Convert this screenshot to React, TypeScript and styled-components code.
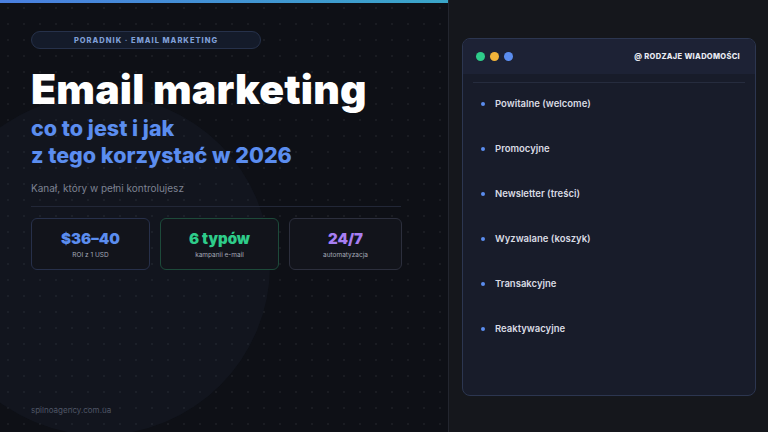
import React from 'react';
import styled, { createGlobalStyle } from 'styled-components';

const Global = createGlobalStyle`
  html, body { margin: 0; padding: 0; background: #0d0f14; }
  body { font-family: Inter, "Open Sans", sans-serif; }
`;

const stats = [
  { value: '$36–40', label: 'ROI z 1 USD', color: '#5b8def', border: '#27304a' },
  { value: '6 typów', label: 'kampanii e-mail', color: '#2ecc8a', border: '#1d4a3a' },
  { value: '24/7', label: 'automatyzacja', color: '#a77ef2', border: '#2c2f3d' },
];

const items = [
  'Powitalne (welcome)',
  'Promocyjne',
  'Newsletter (treści)',
  'Wyzwalane (koszyk)',
  'Transakcyjne',
  'Reaktywacyjne',
];

const App = (): JSX.Element => (
  <Page>
    <Global />
    <Left>
      <TopBar />
      <Glow />
      <Content>
        <Pill>PORADNIK · EMAIL MARKETING</Pill>
        <Title>Email marketing</Title>
        <Subtitle>
          co to jest i jak
          <br />z tego korzystać w 2026
        </Subtitle>
        <Tagline>Kanał, który w pełni kontrolujesz</Tagline>
        <Divider />
        <Stats>
          {stats.map((s) => (
            <Stat key={s.value} $border={s.border}>
              <StatValue $color={s.color}>{s.value}</StatValue>
              <StatLabel>{s.label}</StatLabel>
            </Stat>
          ))}
        </Stats>
        <Footer>spilnoagency.com.ua</Footer>
      </Content>
    </Left>
    <Right>
      <Card>
        <CardHead>
          <Dots>
            <Dot $c="#2ecc8a" />
            <Dot $c="#f2b43a" />
            <Dot $c="#5b8def" />
          </Dots>
          <CardTitle>@ RODZAJE WIADOMOŚCI</CardTitle>
        </CardHead>
        <CardBody>
          <List>
            {items.map((t) => (
              <Item key={t}>
                <Bullet />
                {t}
              </Item>
            ))}
          </List>
        </CardBody>
      </Card>
    </Right>
  </Page>
);

const Page = styled.div`
  width: 768px;
  height: 432px;
  display: flex;
  overflow: hidden;
`;

const Left = styled.div`
  position: relative;
  width: 448px;
  height: 432px;
  background-color: #0e1016;
  background-image: radial-gradient(rgba(255, 255, 255, 0.05) 1px, transparent 1px);
  background-size: 16px 16px;
  overflow: hidden;
`;

const TopBar = styled.div`
  position: absolute;
  top: 0;
  left: 0;
  right: 0;
  height: 3px;
  background: linear-gradient(90deg, #4a7fe0, #3aa6c8);
`;

const Glow = styled.div`
  position: absolute;
  left: -70px;
  top: 95px;
  width: 340px;
  height: 340px;
  border-radius: 50%;
  background: rgba(40, 55, 85, 0.14);
`;

const Content = styled.div`
  position: relative;
  padding: 31px 46px 0 31px;
  display: flex;
  flex-direction: column;
  height: 432px;
  box-sizing: border-box;
`;

const Pill = styled.div`
  width: 230px;
  height: 18px;
  box-sizing: border-box;
  border: 1px solid #26314a;
  border-radius: 9px;
  background: #141b2a;
  color: #7f9fd6;
  font-size: 7.5px;
  font-weight: 800;
  letter-spacing: 1px;
  display: flex;
  align-items: center;
  justify-content: center;
`;

const Title = styled.h1`
  margin: 17px 0 0;
  color: #fff;
  font-size: 41px;
  font-weight: 900;
  line-height: 46px;
  letter-spacing: 0.2px;
`;

const Subtitle = styled.div`
  margin-top: 3px;
  color: #5b8def;
  font-size: 21.5px;
  font-weight: 800;
  line-height: 27px;
`;

const Tagline = styled.div`
  margin-top: 13px;
  color: #7d8292;
  font-size: 10px;
`;

const Divider = styled.div`
  margin-top: 12px;
  height: 1px;
  width: 370px;
  background: #222737;
`;

const Stats = styled.div`
  margin-top: 11px;
  display: grid;
  grid-template-columns: 119px 119px 113px;
  gap: 10px;
`;

const Stat = styled.div<{ $border: string }>`
  height: 52px;
  box-sizing: border-box;
  border: 1px solid ${(p) => p.$border};
  border-radius: 6px;
  background: #12141b;
  display: flex;
  flex-direction: column;
  align-items: center;
  justify-content: center;
  gap: 3px;
`;

const StatValue = styled.div<{ $color: string }>`
  color: ${(p) => p.$color};
  font-size: 15px;
  font-weight: 900;
`;

const StatLabel = styled.div`
  color: #a3a8b6;
  font-size: 6.5px;
`;

const Footer = styled.div`
  margin-top: auto;
  margin-bottom: 17px;
  color: #4f5566;
  font-size: 8px;
`;

const Right = styled.div`
  flex: 1;
  height: 432px;
  background: #15171c;
  border-left: 1px solid #23262f;
  padding: 38px 12px 0 13px;
  box-sizing: border-box;
`;

const Card = styled.div`
  height: 356px;
  border: 1px solid #2c3650;
  border-radius: 8px;
  background: #181c2a;
  overflow: hidden;
  display: flex;
  flex-direction: column;
`;

const CardHead = styled.div`
  height: 35px;
  background: #1d2235;
  display: flex;
  align-items: center;
  justify-content: space-between;
  padding: 0 15px 0 13px;
`;

const Dots = styled.div`
  display: flex;
  gap: 5px;
`;

const Dot = styled.span<{ $c: string }>`
  width: 9px;
  height: 9px;
  border-radius: 50%;
  background: ${(p) => p.$c};
`;

const CardTitle = styled.div`
  color: #e8ebf2;
  font-size: 7.5px;
  font-weight: 800;
  letter-spacing: 0.3px;
`;

const CardBody = styled.div`
  margin: 8px 10px 0;
  border-top: 1px solid #262c3e;
`;

const List = styled.ul`
  list-style: none;
  margin: 0;
  padding: 14px 0 0 8px;
  display: flex;
  flex-direction: column;
  gap: 32px;
`;

const Item = styled.li`
  display: flex;
  align-items: center;
  gap: 10px;
  height: 13px;
  color: #d8dbe3;
  font-size: 9.5px;
  font-weight: 600;
`;

const Bullet = styled.span`
  width: 4px;
  height: 4px;
  border-radius: 50%;
  background: #5b8def;
`;

export default App;
